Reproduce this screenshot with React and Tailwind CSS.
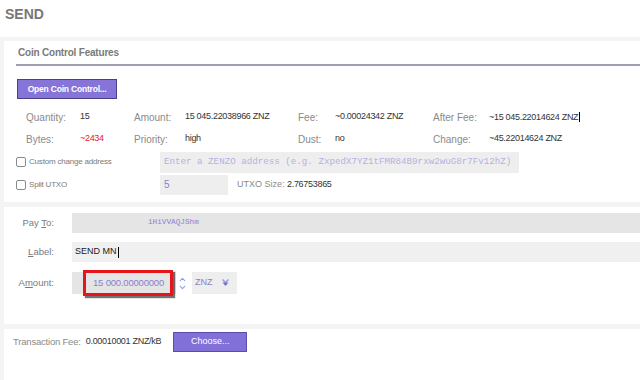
import { ChevronUp, ChevronDown } from 'lucide-react'

const sans = { fontFamily: '"Liberation Sans", Arial, sans-serif' }

function Label({ children }) {
  return <span className="text-[10px] text-[#8a8a8a]">{children}</span>
}

function Value({ children, className = '' }) {
  return <span className={`whitespace-nowrap text-[9px] tracking-[-0.3px] text-[#333] ${className}`}>{children}</span>
}

function Checkbox({ label }) {
  return (
    <label className="flex items-center gap-[3px]">
      <span className="h-[10px] w-[10px] rounded-[2px] border border-[#8a8a8a] bg-white" />
      <span className="text-[8px] tracking-[-0.2px] text-[#7a7a7a]">{label}</span>
    </label>
  )
}

export default function App() {
  return (
    <div className="h-[380px] w-[640px] overflow-hidden bg-white" style={sans}>
      <div className="flex h-[37px] items-center pl-[5px] pb-[8px]">
        <h1 className="text-[14px] font-bold text-[#777]">SEND</h1>
      </div>

      <div className="flex h-[343px] flex-col gap-[5px] bg-[#f4f4f4] pl-[4px] pt-[4px]">
        {/* coin control */}
        <section className="h-[161px] bg-white pl-[8px]">
          <div className="ml-[4px] flex h-[25px] items-end border-b-2 border-[#a09eb0] pb-[4px] pl-[2px]">
            <span className="text-[10px] font-bold tracking-[-0.2px] text-[#7a7a7a]">Coin Control Features</span>
          </div>
          <button
            type="button"
            className="ml-[5px] mt-[13px] h-[20px] w-[100px] whitespace-nowrap border border-[#4a3f8a] bg-[#8674d8] text-[8.5px] font-bold tracking-[-0.2px] text-white"
          >
            Open Coin Control...
          </button>

          <div className="ml-[14px] mt-[7px] grid grid-cols-[54px_54px_51px_113px_37px_98px_56px_1fr] items-center">
            <div className="flex h-[22px] items-center"><Label>Quantity:</Label></div>
            <Value>15</Value>
            <Label>Amount:</Label>
            <Value>15 045.22038966 ZNZ</Value>
            <Label>Fee:</Label>
            <Value>~0.00024342 ZNZ</Value>
            <Label>After Fee:</Label>
            <Value>
              ~15 045.22014624 ZNZ<span className="ml-[1px] inline-block h-[10px] w-px translate-y-[2px] bg-black" />
            </Value>

            <div className="flex h-[22px] items-center"><Label>Bytes:</Label></div>
            <Value className="!text-[#e8202a]">~2434</Value>
            <Label>Priority:</Label>
            <Value>high</Value>
            <Label>Dust:</Label>
            <Value>no</Value>
            <Label>Change:</Label>
            <Value>~45.22014624 ZNZ</Value>
          </div>

          <div className="mt-[1px] flex h-[22px] items-center">
            <div className="w-[148px] pl-[4px]">
              <Checkbox label="Custom change address" />
            </div>
            <div
              className="flex h-[21px] w-[359px] items-center bg-[#eeeeee] pl-[4px] text-[9.2px] text-[#b8b0e0]"
              style={{ fontFamily: '"Liberation Mono", monospace' }}
            >
              Enter a ZENZO address (e.g. ZxpedX7YZ1tFMR84B9rxw2wuG8r7Fv12hZ)
            </div>
          </div>

          <div className="mt-[1px] flex h-[21px] items-center">
            <div className="w-[148px] pl-[4px]">
              <Checkbox label="Split UTXO" />
            </div>
            <div className="flex h-[20px] w-[68px] items-center bg-[#eeeeee] pl-[4px] text-[10px] text-[#8b7fd0]">5</div>
            <span className="ml-[9px] w-[50px] shrink-0 whitespace-nowrap text-[9px] text-[#8a8a8a]">UTXO Size:</span>
            <Value>2.76753865</Value>
          </div>
        </section>

        {/* recipient */}
        <section className="flex h-[117px] flex-col bg-white pt-[6px]">
          <div className="flex h-[20px] items-center">
            <span className="w-[50px] text-right text-[9.5px] text-[#7a7a7a]">
              Pay <span className="underline">T</span>o:
            </span>
            <div
              className="ml-[18px] flex h-[20px] flex-1 items-center bg-[#e5e5e5] pl-[76px] text-[7.7px] text-[#8b7fd0]"
              style={{ fontFamily: '"Liberation Mono", monospace' }}
            >
              1HiVVAQJShm
            </div>
          </div>

          <div className="mt-[9px] flex h-[20px] items-center">
            <span className="w-[50px] text-right text-[9.5px] text-[#7a7a7a]">
              <span className="underline">L</span>abel:
            </span>
            <div className="ml-[18px] flex h-[20px] flex-1 items-center bg-[#f0f0f0] pl-[3px] text-[9px] text-[#222]">
              SEND MN<span className="ml-[1px] inline-block h-[11px] w-px bg-black" />
            </div>
          </div>

          <div className="mt-[8px] flex h-[26px] items-center">
            <span className="w-[50px] text-right text-[9.5px] text-[#7a7a7a]">
              A<span className="underline">m</span>ount:
            </span>
            <div className="ml-[18px] flex h-[22px] w-[104px] items-center bg-[#e5e5e5] pl-[11px]">
              <div className="flex h-[26px] w-[90px] items-center justify-end border-[3px] border-[#e8141c] bg-[#e5e5e5] pr-[6px] text-[9.5px] tracking-[-0.2px] text-[#8b7fd0] shadow-[2px_2px_1px_rgba(0,0,0,0.55)]">
                15 000.00000000
              </div>
            </div>
            <div className="ml-[1px] flex w-[10px] flex-col items-center text-[#8fa0e0]">
              <ChevronUp size={9} strokeWidth={3} className="-mb-[1px]" />
              <ChevronDown size={9} strokeWidth={3} />
            </div>
            <div className="ml-[5px] flex h-[22px] w-[45px] items-center justify-between bg-[#eeeeee] pl-[3px] pr-[8px] text-[9px] text-[#8b7fd0]">
              <span>ZNZ</span>
              <svg width="7" height="8" viewBox="0 0 7 8">
                <path d="M0.5 0.5 L3.5 3.5 L6.5 0.5" fill="none" stroke="#8fa0e0" strokeWidth="1.5" />
                <path d="M0.5 3.5 L3.5 7 L6.5 3.5 Z" fill="#7a6fd0" />
              </svg>
            </div>
          </div>
        </section>

        {/* fee */}
        <section className="flex-1 bg-white">
          <div className="mt-[3px] flex h-[20px] items-center pl-[9px]">
            <span className="text-[9.5px] tracking-[-0.2px] text-[#8a8a8a]">Transaction Fee:</span>
            <span className="ml-[5px] text-[9px] tracking-[-0.3px] text-[#333]">0.00010001 ZNZ/kB</span>
            <button
              type="button"
              className="ml-[12px] h-[20px] w-[74px] border border-[#5a4fa8] bg-[#8070d8] text-[9px] text-white"
            >
              Choose...
            </button>
          </div>
        </section>
      </div>
    </div>
  )
}
